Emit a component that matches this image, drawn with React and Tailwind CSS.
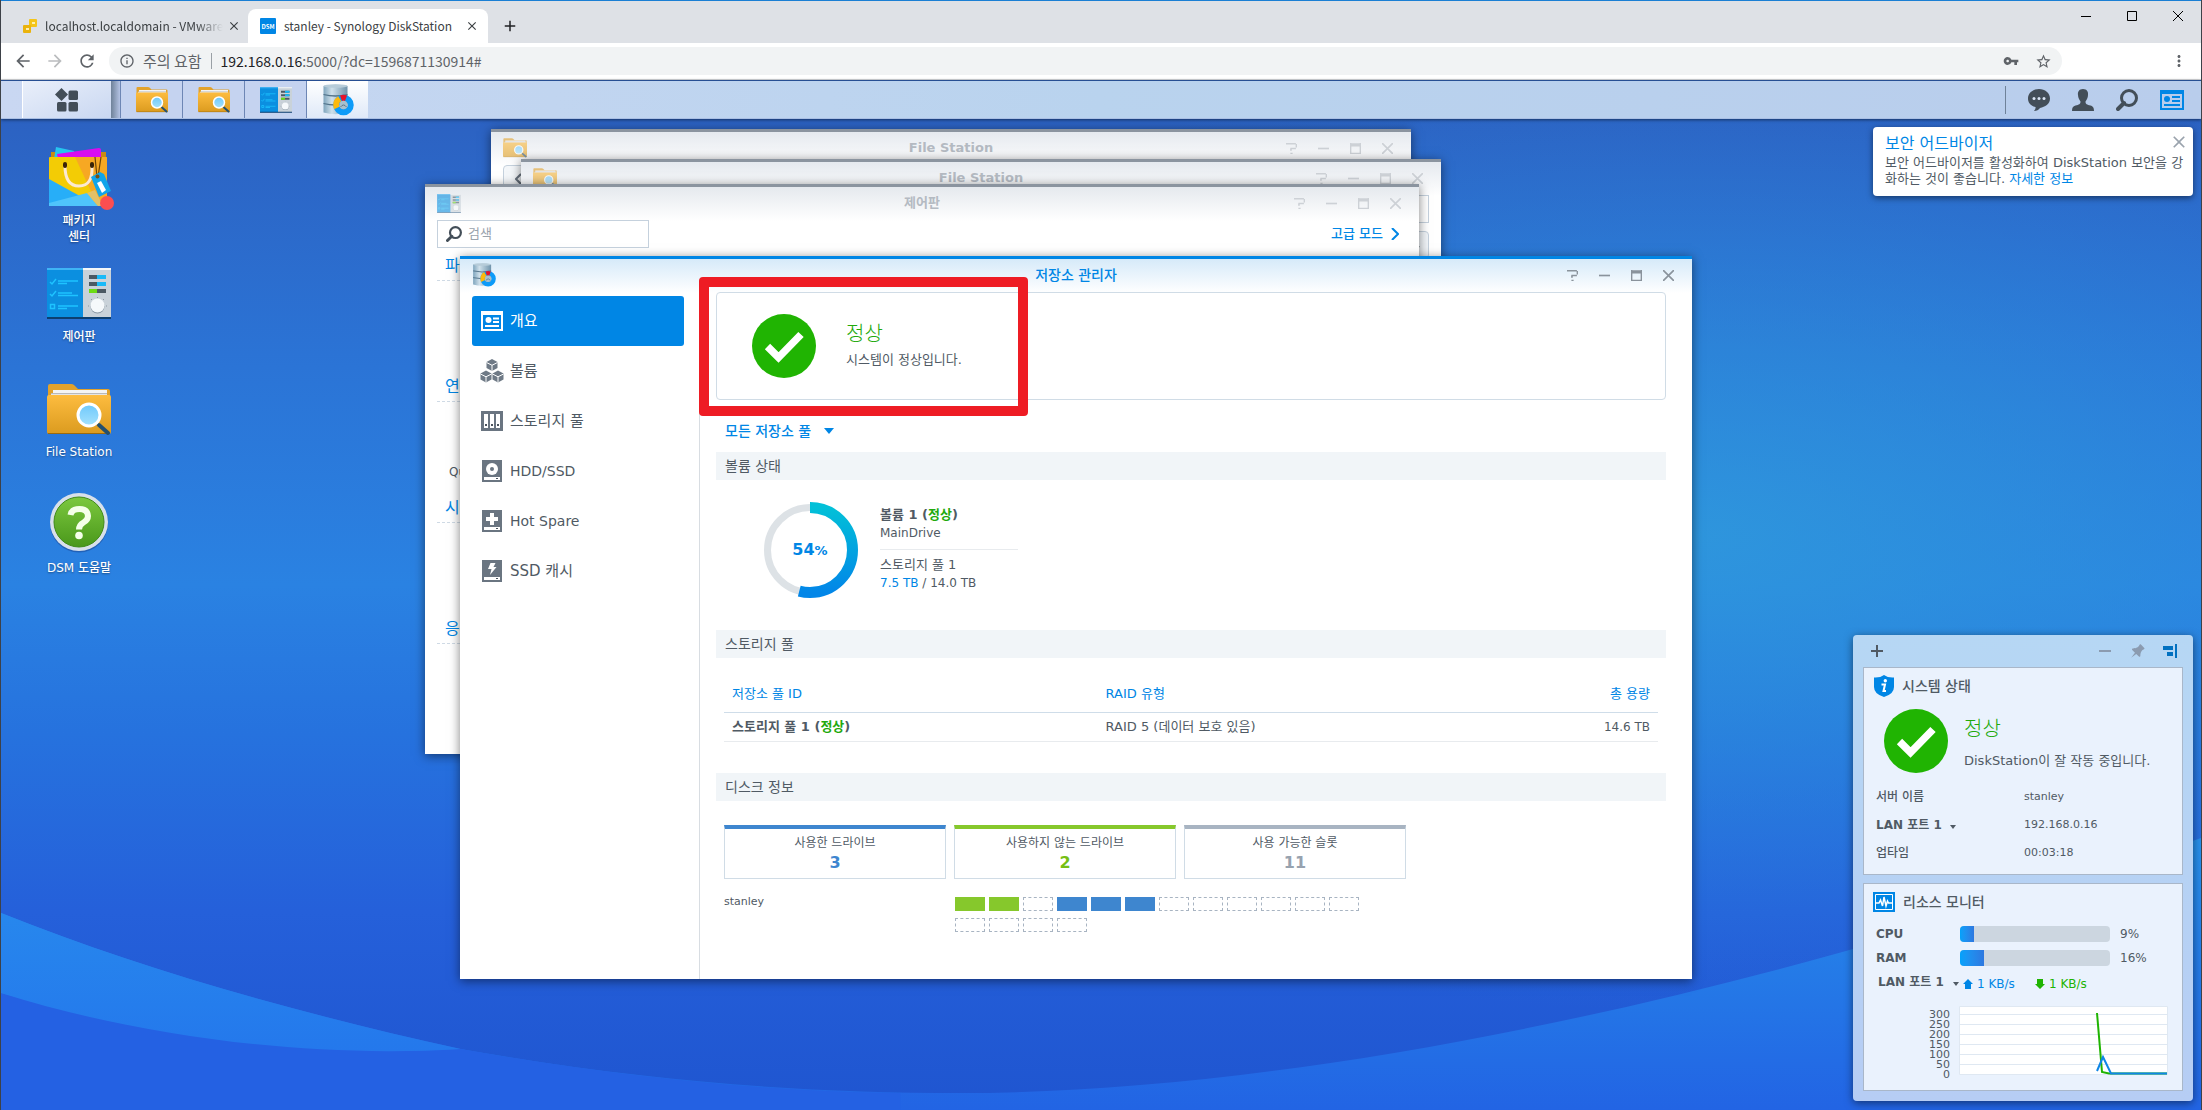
import { MdVpnKey, MdStarBorder, MdRefresh, MdArrowBack, MdArrowForward, MdInfoOutline, MdMoreVert, MdClose, MdAdd } from 'react-icons/md';
import { TiPin } from 'react-icons/ti';

const UI_FONT = "font-['DejaVu_Sans','Noto_Sans_CJK_KR',sans-serif]";
const CHROME_FONT = "font-['Noto_Sans_CJK_KR',sans-serif]";

/* ---------- icons ---------- */

function FolderIcon({ className }) {
  return (
    <svg viewBox="0 0 64 52" className={className} aria-hidden="true">
      <defs>
        <linearGradient id="folderFront" x1="0" y1="0" x2="0" y2="1">
          <stop offset="0" stopColor="#fdbc3f" />
          <stop offset="1" stopColor="#db9b1f" />
        </linearGradient>
        <linearGradient id="folderLens" x1="0" y1="0" x2="0" y2="1">
          <stop offset="0" stopColor="#6ec8fb" />
          <stop offset="1" stopColor="#a5e2fd" />
        </linearGradient>
      </defs>
      <path d="M1 2q0-2 2-2h21q2 0 3 1l4 4h30q2 0 2 2v14H1z" fill="#e2a22b" />
      <path d="M6 6h54v8H6z" fill="#f4f4f4" />
      <path d="M4 9h56v1H4z" fill="#b9b9b9" />
      <path d="M4 10h56v4H4z" fill="#e4e4e4" />
      <path d="M0 13q0-2 2-2h60q2 0 2 2v35q0 2-2 2H2q-2 0-2-2z" fill="url(#folderFront)" />
      <path d="M1 49.500h62" stroke="#9c6a0d" strokeWidth="1" />
      <path d="M52 41l9 8" stroke="#24506f" strokeWidth="4" strokeLinecap="round" />
      <circle cx="42" cy="31" r="11" fill="url(#folderLens)" stroke="#fff" strokeWidth="3" />
    </svg>
  );
}

function ControlPanelIcon({ className }) {
  return (
    <svg viewBox="0 0 64 51" className={className} aria-hidden="true">
      <path d="M0 0h37v50H0z" fill="#0b8fe0" />
      <path d="M0 0h37v2H0z" fill="#3fb4f5" />
      <path d="M36 0h28v50H36z" fill="#c9d2d9" />
      <path d="M36 0h28v2H36z" fill="#f4f7f9" />
      <path d="M0 50h64" stroke="#0c3f70" strokeWidth="2" />
      <g stroke="#1ec3ff" strokeWidth="1.500" fill="none">
        <path d="M3 14l2 2 4-5M11 13h20M11 15.500h9M3 26l2 2 4-5M11 25h14M11 27.500h20M3.500 36.500h4v4h-4zM11 38h20M11 40.500h9" />
      </g>
      <path d="M42 7h17v4H42zM42 14h17v4H42zM42 21h17v4H42z" fill="#4b5963" />
      <path d="M50 7h9v4h-9zM50 14h9v4h-9z" fill="#19baf8" />
      <path d="M42 21h8v4h-8z" fill="#6cdc14" />
      <g stroke="#8d99a2">
        <path d="M42 38h-1M59 38h1M50.500 30v-1M45 32l-1-1M56 32l1-1" />
      </g>
      <circle cx="50.500" cy="38.500" r="7" fill="#8896a1" />
      <circle cx="50.500" cy="37.500" r="7" fill="#f5f9fb" />
    </svg>
  );
}

function StorageIcon({ className }) {
  return (
    <svg viewBox="0 0 64 64" className={className} aria-hidden="true">
      <defs>
        <linearGradient id="drum" x1="0" y1="0" x2="1" y2="0">
          <stop offset="0" stopColor="#7fa5bd" />
          <stop offset=".35" stopColor="#cfe0ea" />
          <stop offset="1" stopColor="#6f93ab" />
        </linearGradient>
      </defs>
      <path d="M3 4q24-6 48 0v53q-24 7-48 0z" fill="url(#drum)" />
      <ellipse cx="27" cy="4" rx="24" ry="3.500" fill="#b7ccd9" />
      <path d="M3 21q24 6 48 0M3 39q24 6 48 0" stroke="#52738a" strokeWidth="2.500" fill="none" />
      <circle cx="43" cy="42" r="14.500" fill="none" stroke="#0d9bf8" strokeWidth="12" />
      <path d="M35.500 29.500A14.500 14.500 0 0 0 29.500 48" fill="none" stroke="#fdb90b" strokeWidth="12" />
      <path d="M38 28.500A14.500 14.500 0 0 1 48 28.500" fill="none" stroke="#e5132a" strokeWidth="12" />
      <circle cx="43" cy="42" r="8.500" fill="#a8c0ce" />
      <path d="M37 46q6-8 12 0" stroke="#5d7687" strokeWidth="2" fill="none" />
    </svg>
  );
}

function PackageIcon({ className }) {
  return (
    <svg viewBox="0 0 66 64" className={className} aria-hidden="true">
      <path d="M3 5h55v10H3z" fill="#c98a12" />
      <path d="M8 0l18 4 2 8H6z" fill="#27c5ef" />
      <path d="M9 7l42-6q2 0 2 2v9H10z" fill="#d80cf0" />
      <path d="M1 11q0-1 1-1h56q1 0 1 1v48H1z" fill="#f3cc05" />
      <path d="M27 10h31q1 0 1 1v48H50z" fill="#f7a823" />
      <path d="M1 32l49 27H1z" fill="#27aef8" />
      <path d="M1 56l38-10 11 13H1z" fill="#4fc4fb" />
      <path d="M39 46l8-3 8 16h-5z" fill="#e2c067" />
      <path d="M17 19q0 20 14 20t13-20" fill="none" stroke="#fbe9d3" strokeWidth="3" />
      <path d="M17 17v2M44 17v2" stroke="#3a2408" strokeWidth="4" strokeLinecap="round" />
      <path d="M47 10l2 20M53 10l-3 20" stroke="#6d4508" strokeWidth="1.200" />
      <path d="M43 30l9-5 4 2 7 17-12 6z" fill="#11a5ea" />
      <circle cx="49.500" cy="29.500" r="2" fill="#7c5010" />
      <path d="M49 36l4-2 5 9-4 3z" fill="#fff" />
      <circle cx="59" cy="56" r="7" fill="#fb4e51" />
    </svg>
  );
}

function HelpIcon({ className }) {
  return (
    <svg viewBox="0 0 60 62" className={className} aria-hidden="true">
      <defs>
        <linearGradient id="helpFill" x1="0" y1="0" x2="0" y2="1">
          <stop offset="0" stopColor="#7cc83e" />
          <stop offset="1" stopColor="#4a981b" />
        </linearGradient>
      </defs>
      <circle cx="30" cy="31.500" r="29" fill="#1c4d9c" opacity=".6" />
      <circle cx="30" cy="30" r="29" fill="#d8e0ea" />
      <circle cx="30" cy="30" r="25" fill="url(#helpFill)" stroke="#3f8a17" />
      <path d="M21.500 23q1-6 9-6t8.500 7q0 4-4.500 6.500t-4.500 7" fill="none" stroke="#f5ffe9" strokeWidth="6" />
      <circle cx="30" cy="43.500" r="3.800" fill="#f5ffe9" />
    </svg>
  );
}

function CheckCircle() {
  return (
    <svg viewBox="0 0 64 64" className="size-16 shrink-0" aria-hidden="true">
      <circle cx="32" cy="32" r="32" fill="#20b402" />
      <path d="M15.500 32.500L26.500 43.500 49 20.500" fill="none" stroke="#fff" strokeWidth="7.500" />
    </svg>
  );
}

function SearchIcon({ className }) {
  return (
    <svg viewBox="0 0 22 22" className={className} aria-hidden="true">
      <circle cx="13" cy="9" r="7.500" fill="none" stroke="currentColor" strokeWidth="3" />
      <path d="M2 20l6-6" stroke="currentColor" strokeWidth="4" strokeLinecap="round" />
    </svg>
  );
}

function OverviewIcon({ className }) {
  return (
    <svg viewBox="0 0 24 20" className={className} aria-hidden="true">
      <path fillRule="evenodd" d="M0 0h24v20H0zM2 4v14h20V4z" fill="currentColor" />
      <circle cx="7" cy="9" r="3" fill="currentColor" />
      <path d="M12 7h8M12 11h8M4 15h16" stroke="currentColor" strokeWidth="2" />
    </svg>
  );
}

function DriveGlyph({ type }) {
  if (type === 'overview') {
    return (
      <svg viewBox="0 0 22 20" className="h-5 w-[22px]" aria-hidden="true">
        <path d="M0 0h22v20H0z" fill="#fff" />
        <path d="M2 4h18v14H2z" fill="#0086e5" />
        <circle cx="7.500" cy="9" r="3" fill="#fff" />
        <path d="M12 7.500h6M12 11h6M4 15h14" stroke="#fff" strokeWidth="2" />
      </svg>
    );
  }
  if (type === 'volume') {
    return (
      <svg viewBox="0 0 24 24" className="-ml-px size-6" aria-hidden="true">
        {['translate(6 0)', 'translate(0 11.500)', 'translate(12 11.500)'].map((t) => (
          <g key={t} transform={t}>
            <path d="M6 0l5.500 3v6L6 12 .500 9V3z" fill="#6f7a86" />
            <path d="M.500 3.500L6 6.300l5.500-2.800M6 6.300V12" stroke="#fff" strokeWidth="1" fill="none" />
          </g>
        ))}
      </svg>
    );
  }
  if (type === 'pool') {
    return (
      <svg viewBox="0 0 22 20" className="h-5 w-[22px]" aria-hidden="true">
        <path d="M0 0h22v20H0z" fill="#6a7581" />
        <path d="M3 3h4v14H3zM9 3h4v14H9zM15 3h4v14h-4z" fill="#fff" />
        <path d="M4 13h2v2H4zM10 13h2v2h-2zM16 13h2v2h-2z" fill="#4b545e" />
      </svg>
    );
  }
  return (
    <svg viewBox="0 0 20 22" className="ml-px h-[22px] w-5" aria-hidden="true">
      <path d="M0 0h20v22H0z" fill="#6a7581" />
      <path d="M2 17h16v3H2z" fill="#fff" />
      <path d="M14 18h2v1h-2z" fill="#4b545e" />
      {type === 'disk' && (
        <>
          <circle cx="10" cy="9" r="6" fill="#fff" />
          <circle cx="10" cy="9" r="2" fill="#6a7581" />
        </>
      )}
      {type === 'spare' && <path d="M8 3h4v4h4v4h-4v4H8v-4H4V7h4z" fill="#fff" />}
      {type === 'cache' && <path d="M8.500 3h5l-2 4h3L8 15l1.500-6H6z" fill="#fff" />}
    </svg>
  );
}

/* ---------- browser ---------- */

function BrowserTabs() {
  return (
    <div className={`flex h-[43px] shrink-0 items-end border-t border-[#1a7fd4] bg-[#dee1e6] ${CHROME_FONT}`}>
      <div className="flex h-[34px] w-[247px] items-center pr-2 pl-[22px] text-xs text-[#3c4043]">
        <svg viewBox="0 0 14 14" className="mr-2 size-[14px] shrink-0" aria-hidden="true">
          <path d="M6 1q0-1 1-1h6q1 0 1 1v6q0 1-1 1H7q-1 0-1-1z" fill="#f5c518" />
          <path d="M0 7q0-1 1-1h6q1 0 1 1v6q0 1-1 1H1q-1 0-1-1z" fill="#eab30c" />
          <path d="M9 3h3v2H9zM3 9h3v2H3z" fill="#fdf0b0" />
        </svg>
        <span className="flex-1 mask-[linear-gradient(to_right,black_85%,transparent)] whitespace-nowrap">
          localhost.localdomain - VMware
        </span>
        <button aria-label="탭 닫기" className="ml-1 text-[#3c4043]"><MdClose size={14} /></button>
      </div>
      <div className="flex h-[34px] w-[240px] items-center rounded-t-lg bg-white pl-3 text-xs text-[#3c4043]">
        <svg viewBox="0 0 16 16" className="mr-2 size-4 shrink-0" aria-hidden="true">
          <rect width="16" height="16" rx="1" fill="#0086e5" />
          <text x="8" y="10.500" textAnchor="middle" fontSize="6" fontWeight="bold" fill="#fff">DSM</text>
        </svg>
        <span className="flex-1 whitespace-nowrap">stanley - Synology DiskStation</span>
        <button aria-label="탭 닫기" className="mr-[9px]"><MdClose size={14} /></button>
      </div>
      <button aria-label="새 탭" className="mb-2 ml-[13px] text-[#202124]"><MdAdd size={18} /></button>
      <div className="ml-auto flex h-[30px] items-center self-start text-black">
        <button aria-label="최소화" className="flex w-[46px] justify-center">
          <svg viewBox="0 0 10 10" className="size-[10px]"><path d="M0 5.500h10" stroke="currentColor" /></svg>
        </button>
        <button aria-label="최대화" className="flex w-[46px] justify-center">
          <svg viewBox="0 0 10 10" className="size-[10px]"><path d="M.500.500h9v9h-9z" fill="none" stroke="currentColor" /></svg>
        </button>
        <button aria-label="닫기" className="flex w-[46px] justify-center">
          <svg viewBox="0 0 10 10" className="size-[10px]"><path d="M0 0l10 10M10 0L0 10" stroke="currentColor" /></svg>
        </button>
      </div>
    </div>
  );
}

function AddressBar() {
  return (
    <div className={`flex h-[37px] shrink-0 items-center border-b border-[#d5d7da] bg-white pr-[13px] pl-3 text-[#5f6368] ${CHROME_FONT}`}>
      <div className="flex w-24 items-center gap-3">
        <button aria-label="뒤로"><MdArrowBack size={20} /></button>
        <button aria-label="앞으로" className="text-[#babcbe]"><MdArrowForward size={20} /></button>
        <button aria-label="새로고침"><MdRefresh size={20} /></button>
      </div>
      <div className="flex h-7 flex-1 items-center rounded-full bg-[#f1f3f4] px-[10px] text-sm">
        <MdInfoOutline size={16} />
        <span className="ml-2 text-[15px]">주의 요함</span>
        <span className="mx-[9px] h-4 w-px bg-[#9aa0a6]" />
        <span className="flex-1"><span className="text-[#202124]">192.168.0.16</span>:5000/?dc=1596871130914#</span>
        <MdVpnKey size={16} />
        <button aria-label="북마크" className="ml-4"><MdStarBorder size={17} /></button>
      </div>
      <button aria-label="메뉴" className="ml-[108px]"><MdMoreVert size={18} /></button>
    </div>
  );
}

/* ---------- DSM taskbar ---------- */

function TaskButton({ label, active, children }) {
  return (
    <button
      aria-label={label}
      className={`flex h-full w-[62px] items-center justify-center border-l border-[#6d86b5] ${
        active ? 'bg-linear-to-b from-white to-[#dfe9f8]' : 'bg-[#c5d3f0]'
      }`}
    >
      {children}
    </button>
  );
}

function Taskbar() {
  return (
    <div className="relative z-10 flex h-[39px] shrink-0 border-t border-b border-t-[#274f93] border-b-[#a9bfe4] bg-linear-to-r from-[#c9d7f2] via-[#b9d3ee] to-[#b9cdec] shadow-[0_1px_3px_rgba(0,0,0,0.5)]">
      <div className="w-[21px]" />
      <button aria-label="기본 메뉴" className="flex w-[89px] items-center justify-center border-l border-white bg-linear-to-br from-[#e9effa] to-[#c9d7f1]">
        <svg viewBox="0 0 24 24" className="size-6 text-[#434e58]" fill="currentColor" aria-hidden="true">
          <path d="M6.500 0l6.500 6.500-6.500 6.500L0 6.500z" />
          <rect x="13.500" y="2.500" width="9.500" height="9.500" rx="1.500" />
          <rect x="2" y="14" width="9.500" height="9.500" rx="1.500" />
          <rect x="13.500" y="14" width="9.500" height="9.500" rx="1.500" />
        </svg>
      </button>
      <div className="w-[9px] bg-linear-to-r from-[#6f8299] to-[#b4c3e4]" />
      <TaskButton label="File Station"><FolderIcon className="h-[26px] w-8" /></TaskButton>
      <TaskButton label="File Station"><FolderIcon className="h-[26px] w-8" /></TaskButton>
      <TaskButton label="제어판"><ControlPanelIcon className="h-[26px] w-8" /></TaskButton>
      <TaskButton label="저장소 관리자" active><StorageIcon className="size-8" /></TaskButton>
      <div className="ml-auto flex items-center gap-[22px] pr-[17px] text-[#434e58]">
        <span className="h-7 w-px bg-[#6f8299]" />
        <button aria-label="알림">
          <svg viewBox="0 0 22 22" className="size-[22px]" aria-hidden="true">
            <path d="M11 0c6 0 11 4 11 9.500S17 18 12 19q-2 3-6 3 2-2 1.500-4C3 17 0 14 0 9.500 0 4 5 0 11 0z" fill="currentColor" />
            <circle cx="6" cy="9.500" r="1.500" fill="#dbe6f5" />
            <circle cx="11" cy="9.500" r="1.500" fill="#dbe6f5" />
            <circle cx="16" cy="9.500" r="1.500" fill="#dbe6f5" />
          </svg>
        </button>
        <button aria-label="사용자">
          <svg viewBox="0 0 22 22" className="size-[22px]" aria-hidden="true">
            <path d="M11 0c4 0 5.500 3 5 6 0 3-1.500 5-2.500 6.500 0 3 1.500 3 5 4 2.500.800 3.500 2 3.500 5.500H0c0-3.500 1-4.700 3.500-5.500 3.500-1 5-1 5-4C7.500 11 6 9 6 6c-.500-3 1-6 5-6z" fill="currentColor" />
          </svg>
        </button>
        <button aria-label="검색"><SearchIcon className="size-[22px]" /></button>
        <button aria-label="위젯" className="text-[#0086e5]"><OverviewIcon className="h-5 w-6" /></button>
      </div>
    </div>
  );
}

/* ---------- windows ---------- */

const windowControls = [
  { label: '도움말', d: 'M0 .5h9M9.500 1v3M4 5h5M4.500 5v2M4 9.500h2' },
  { label: '최소화', d: 'M0 5h10' },
  { label: '최대화', d: 'M.500 1h9M.500 2.500h9M.500 0v10M9.500 0v10M0 9.500h10' },
  { label: '닫기', d: 'M0 0l10 10M10 0L0 10' },
];

function Window({ title, active, icon, className, children }) {
  return (
    <section
      className={`absolute flex flex-col border-t-3 shadow-[0_2px_10px_rgba(0,0,0,0.5)] ${
        active
          ? 'border-[#0086e5] bg-[linear-gradient(to_bottom,#d6eaf9,#fff_34px)]'
          : 'border-[#8b949f] bg-[linear-gradient(to_bottom,#e5e9ee,#fff_34px)]'
      } ${className}`}
    >
      <header className="grid h-8 shrink-0 grid-cols-[128px_1fr_128px] items-center px-2">
        <span className={active ? 'pl-1' : 'pl-1 opacity-60'}>{icon}</span>
        <h2 className={`text-center leading-5 ${active ? 'text-sm font-medium text-[#0086e5]' : 'text-[13px] font-bold text-[#b4bac2]'}`}>
          {title}
        </h2>
        <div className={`flex ${active ? 'text-[#8a939c]' : 'text-[#cdd1d6]'}`}>
          {windowControls.map((c) => (
            <button key={c.label} aria-label={c.label} className="flex h-6 w-8 items-center justify-center">
              <svg viewBox="0 0 10 10" className="size-[11px]" aria-hidden="true">
                <path d={c.d} fill="none" stroke="currentColor" strokeWidth="1.500" />
              </svg>
            </button>
          ))}
        </div>
      </header>
      {children}
    </section>
  );
}

function FileStationBack() {
  return (
    <Window title="File Station" icon={<FolderIcon className="h-5 w-6" />} className="top-[10px] left-[490px] h-[400px] w-[920px]">
      <div className="px-3 pt-px">
        <button aria-label="이전" className="flex h-7 w-8 items-center justify-center rounded border border-[#c5d1dd] bg-[#f4f7fa] text-[#6a7581]">
          <svg viewBox="0 0 8 12" className="h-3 w-2"><path d="M6 1L1 6l5 5" fill="none" stroke="currentColor" strokeWidth="2" /></svg>
        </button>
      </div>
    </Window>
  );
}

function FileStationFront() {
  return (
    <Window title="File Station" icon={<FolderIcon className="h-5 w-6" />} className="top-10 left-[520px] h-[400px] w-[920px]">
      <div className="flex flex-col items-end gap-2 px-3 pt-px">
        <input aria-label="경로" className="h-7 w-60 border border-[#c5d1dd] bg-white" />
        <button aria-label="정렬" className="flex h-7 w-7 items-center justify-center rounded border border-[#c5d1dd] bg-[#f1f5f9] text-[#434e58]">
          <svg viewBox="0 0 10 12" className="h-3 w-[10px]"><path d="M5 0v10M1 7l4 4 4-4" fill="none" stroke="currentColor" strokeWidth="2" /></svg>
        </button>
      </div>
    </Window>
  );
}

const controlPanelGroups = [
  { name: '파일 공유' },
  { name: '연결성', item: 'QuickConnect' },
  { name: '시스템' },
  { name: '응용 프로그램' },
];

function ControlPanel() {
  return (
    <Window title="제어판" icon={<ControlPanelIcon className="h-[19px] w-6" />} className="top-[65px] left-[424px] h-[570px] w-[994px]">
      <div className="flex items-center justify-between pt-px pr-5 pl-3">
        <label className="flex h-7 w-[212px] items-center gap-[6px] border border-[#c5d1dd] bg-white pl-2 text-[#434e58]">
          <SearchIcon className="size-4" />
          <input aria-label="검색" placeholder="검색" className="w-40 text-[13px] outline-none placeholder:text-[#9aa3ad]" />
        </label>
        <a href="#" className="flex items-center gap-2 text-[13px] font-medium text-[#0086e5]">
          고급 모드
          <svg viewBox="0 0 8 12" className="h-3 w-2"><path d="M1 0l6 6-6 6" fill="none" stroke="currentColor" strokeWidth="2" /></svg>
        </a>
      </div>
      <div className="pl-3">
        {controlPanelGroups.map((g) => (
          <div key={g.name} className="h-[121px]">
            <h3 className="h-[33px] border-b border-dashed border-[#cfdae5] pt-2 pl-2 text-base leading-5 text-[#0086e5]">{g.name}</h3>
            {g.item && <p className="pt-[60px] pl-3 text-xs leading-5 text-[#505a64]">{g.item}</p>}
          </div>
        ))}
      </div>
    </Window>
  );
}

const menu = [
  { type: 'overview', label: '개요', current: true },
  { type: 'volume', label: '볼륨' },
  { type: 'pool', label: '스토리지 풀' },
  { type: 'disk', label: 'HDD/SSD', latin: true },
  { type: 'spare', label: 'Hot Spare', latin: true },
  { type: 'cache', label: 'SSD 캐시' },
];

function SectionTitle({ children }) {
  return <h3 className="h-7 bg-[#f1f5f8] pl-[9px] text-sm leading-7 text-[#505a64]">{children}</h3>;
}

function UsageRing({ percent }) {
  const r = 42.5;
  const length = 2 * Math.PI * r;
  return (
    <div className="relative size-24 shrink-0">
      <svg viewBox="0 0 96 96" className="size-24" aria-hidden="true">
        <defs>
          <linearGradient id="ring" x1="0" y1="0" x2="1" y2="0">
            <stop offset="0" stopColor="#0286e8" />
            <stop offset="1" stopColor="#02c0d8" />
          </linearGradient>
        </defs>
        <circle cx="48" cy="48" r={r} fill="none" stroke="#dde2e6" strokeWidth="7" />
        <circle
          cx="48" cy="48" r={r} fill="none" stroke="url(#ring)" strokeWidth="11"
          strokeDasharray={`${(length * percent) / 100} ${length}`}
          transform="rotate(-90 48 48)"
        />
      </svg>
      <p className="absolute inset-0 text-center text-base leading-[96px] font-bold text-[#0086e5]">
        {percent}<span className="text-[13px]">%</span>
      </p>
    </div>
  );
}

const driveCounts = [
  { label: '사용한 드라이브', count: 3, bar: 'border-t-[#3e86cf]', text: 'text-[#3e86cf]' },
  { label: '사용하지 않는 드라이브', count: 2, bar: 'border-t-[#86c82c]', text: 'text-[#76bf14]' },
  { label: '사용 가능한 슬롯', count: 11, bar: 'border-t-[#a8b4c2]', text: 'text-[#97a2af]' },
];

const slots = ['free', 'free', '', 'used', 'used', 'used', '', '', '', '', '', '', '', '', '', ''];
const slotStyle = {
  free: 'bg-[#86c82c]',
  used: 'bg-[#3e86cf]',
  '': 'border border-dashed border-[#a8b4c2]',
};

function StorageManager() {
  return (
    <Window title="저장소 관리자" active icon={<StorageIcon className="size-6" />} className="top-[137px] left-[459px] w-[1232px]">
      <div className="flex text-[#505a64]">
        <nav className="w-60 border-r border-[#d8dde2] pt-[5px] pl-3">
          {menu.map((m) => (
            <a
              key={m.type}
              href="#"
              className={`flex h-[50px] w-[212px] items-center rounded-[3px] pl-[9px] ${m.latin ? 'text-sm' : 'text-[15px]'} ${
                m.current ? 'bg-[#0086e5] text-white' : ''
              }`}
            >
              <span className="w-[29px]"><DriveGlyph type={m.type} /></span>
              {m.label}
            </a>
          ))}
        </nav>
        <div className="flex-1 pt-px pr-[26px] pb-[47px] pl-4">
          <div className="relative flex h-[108px] items-center gap-[30px] rounded border border-[#d0dce6] bg-white pl-[35px]">
            <CheckCircle />
            <div>
              <p className="text-xl leading-7 font-light text-[#22a90b]">정상</p>
              <p className="text-[13px] leading-6">시스템이 정상입니다.</p>
            </div>
            <div className="pointer-events-none absolute -top-4 -left-[18px] h-[139px] w-[329px] rounded border-10 border-[#ee1c24]" />
          </div>
          <div className="mt-[21px] mb-[11px] flex h-5 items-center gap-3 pl-[9px] text-[#0086e5]">
            <select aria-label="저장소 풀 선택" className="appearance-none text-sm leading-5 font-medium">
              <option>모든 저장소 풀</option>
            </select>
            <svg viewBox="0 0 10 6" className="h-[6px] w-[10px]" aria-hidden="true"><path d="M0 0h10L5 6z" fill="currentColor" /></svg>
          </div>

          <SectionTitle>볼륨 상태</SectionTitle>
          <div className="flex h-[150px] gap-[22px] pt-[22px] pl-[46px]">
            <UsageRing percent={54} />
            <div className="w-[138px] pt-[3px] text-[13px] leading-[19px]">
              <p className="font-bold">볼륨 1 (<span className="text-[#22a90b]">정상</span>)</p>
              <p className="text-xs leading-[19px]">MainDrive</p>
              <p className="mt-[6px] border-t border-[#e8ebee] pt-[5px]">스토리지 풀 1</p>
              <p className="text-xs leading-[19px] whitespace-nowrap"><span className="text-[#0086e5]">7.5 TB</span> / 14.0 TB</p>
            </div>
          </div>

          <SectionTitle>스토리지 풀</SectionTitle>
          <div className="mx-2 mt-[18px] mb-[31px]">
            <table className="w-full text-left text-[13px]">
              <thead>
                <tr className="h-9 border-b border-[#cfdde9] text-[#0086e5]">
                  <th className="w-[40%] px-2 font-normal">저장소 풀 ID</th>
                  <th className="px-2 font-normal">RAID 유형</th>
                  <th className="px-2 text-right font-normal">총 용량</th>
                </tr>
              </thead>
              <tbody>
                <tr className="h-[29px] border-b border-[#e8ebee]">
                  <td className="px-2 font-bold">스토리지 풀 1 (<span className="text-[#22a90b]">정상</span>)</td>
                  <td className="px-2">RAID 5 (데이터 보호 있음)</td>
                  <td className="px-2 text-right text-xs">14.6 TB</td>
                </tr>
              </tbody>
            </table>
          </div>

          <SectionTitle>디스크 정보</SectionTitle>
          <div className="mt-6 ml-2 flex gap-2">
            {driveCounts.map((d) => (
              <div key={d.label} className={`h-[54px] w-[222px] border border-t-4 border-[#d0dce6] pt-1 text-center ${d.bar}`}>
                <p className="text-xs leading-5">{d.label}</p>
                <p className={`text-base leading-5 font-bold ${d.text}`}>{d.count}</p>
              </div>
            ))}
          </div>
          <div className="mt-[18px] ml-2 flex">
            <p className="w-[231px] text-[11px] leading-[10px]">stanley</p>
            <div className="flex w-[408px] flex-wrap gap-x-1 gap-y-[7px]">
              {slots.map((s, i) => (
                <span key={i} className={`h-[14px] w-[30px] ${slotStyle[s]}`} />
              ))}
            </div>
          </div>
        </div>
      </div>
    </Window>
  );
}

/* ---------- desktop ---------- */

function Wallpaper() {
  return (
    <svg viewBox="0 0 2202 991" preserveAspectRatio="none" className="absolute inset-0 h-full w-full" aria-hidden="true">
      <defs>
        <linearGradient id="sky" x1="0" y1="0" x2="0" y2="1">
          <stop offset="0" stopColor="#2c62c2" />
          <stop offset=".25" stopColor="#2b74d6" />
          <stop offset=".47" stopColor="#2a82e2" />
          <stop offset=".62" stopColor="#2672de" />
          <stop offset=".8" stopColor="#2560da" />
          <stop offset="1" stopColor="#1f55d0" />
        </linearGradient>
        <radialGradient id="glow" cx="0.770" cy="0.420" r="0.480">
          <stop offset="0" stopColor="#2f9bdc" stopOpacity=".8" />
          <stop offset=".4" stopColor="#2d94dc" stopOpacity=".5" />
          <stop offset="1" stopColor="#2a84e2" stopOpacity="0" />
        </radialGradient>
        <linearGradient id="wave" x1="0" y1="0" x2="0" y2="1">
          <stop offset="0" stopColor="#2790ea" />
          <stop offset="1" stopColor="#2264e4" />
        </linearGradient>
        <linearGradient id="band" x1="0" y1="0" x2="0" y2="1">
          <stop offset="0" stopColor="#2787ed" />
          <stop offset="1" stopColor="#2478ec" />
        </linearGradient>
      </defs>
      <path d="M0 0h2202v991H0z" fill="url(#sky)" />
      <path d="M0 0h2202v991H0z" fill="url(#glow)" />
      <path d="M0 794C140 850 300 895 460 930 640 962 800 974 960 974 1300 974 1750 880 2202 719V991H0z" fill="url(#wave)" />
      <path d="M0 874C120 905 280 940 460 930 640 962 800 974 900 974L900 991H0z" fill="#2461e3" />
      <path d="M0 794C140 850 300 895 460 930 300 940 130 915 0 874z" fill="url(#band)" />
    </svg>
  );
}

const shortcuts = [
  { label: ['패키지', '센터'], icon: <PackageIcon className="ml-1 h-16 w-[66px]" />, className: 'top-[28px]', gap: 'mt-[2px]' },
  { label: ['제어판'], icon: <ControlPanelIcon className="h-[51px] w-16" />, className: 'top-[149px]', gap: 'mt-[10px]' },
  { label: ['File Station'], icon: <FolderIcon className="h-[52px] w-16" />, className: 'top-[265px]', gap: 'mt-2' },
  { label: ['DSM 도움말'], icon: <HelpIcon className="h-[62px] w-[60px]" />, className: 'top-[373px]', gap: 'mt-[6px]' },
];

function DesktopIcons() {
  return shortcuts.map((s) => (
    <button key={s.label[0]} className={`absolute left-[28px] flex w-[100px] flex-col items-center text-white ${s.className}`}>
      {s.icon}
      <span className={`text-xs leading-4 font-medium [text-shadow:0_1px_2px_rgba(0,0,0,0.4)] ${s.gap}`}>
        {s.label.map((line) => (
          <span key={line} className="block">{line}</span>
        ))}
      </span>
    </button>
  ));
}

function Notification() {
  return (
    <aside className="absolute top-2 right-2 w-80 rounded bg-white py-[6px] pr-3 pb-[9px] pl-3 shadow-[0_2px_6px_rgba(0,0,0,0.5)]">
      <div className="flex h-[22px] items-center justify-between">
        <h2 className="text-base leading-5 text-[#0086e5]">보안 어드바이저</h2>
        <button aria-label="닫기" className="-mt-1 -mr-2 text-[#9aa3ad]"><MdClose size={20} /></button>
      </div>
      <p className="text-[13px] leading-4 whitespace-nowrap text-[#505a64]">
        보안 어드바이저를 활성화하여 DiskStation 보안을 강
        <br />
        화하는 것이 좋습니다. <a href="#" className="text-[#0086e5]">자세한 정보</a>
      </p>
    </aside>
  );
}

function Caret() {
  return <svg viewBox="0 0 6 4" className="mt-1 h-1 w-[6px]" aria-hidden="true"><path d="M0 0h6L3 4z" fill="currentColor" /></svg>;
}

const statusRows = [
  { label: '서버 이름', value: 'stanley' },
  { label: 'LAN 포트 1', value: '192.168.0.16', menu: true },
  { label: '업타임', value: '00:03:18' },
];

const meters = [
  { label: 'CPU', value: 9 },
  { label: 'RAM', value: 16 },
];

function SystemHealth() {
  return (
    <section className="h-[208px] border border-[#a9b7c9] bg-[#eaf2fd]">
      <h3 className="flex h-9 items-center gap-2 pl-[10px] text-sm font-medium">
        <svg viewBox="0 0 20 22" className="h-[22px] w-5" aria-hidden="true">
          <path d="M10 0q4 3 10 2.500V12q0 7-10 10Q0 19 0 12V2.500Q6 3 10 0z" fill="#0086e5" />
          <circle cx="11.300" cy="5.700" r="1.700" fill="#fff" />
          <path d="M7.500 9.500h3.500L9.500 16H12" fill="none" stroke="#fff" strokeWidth="2" />
        </svg>
        시스템 상태
      </h3>
      <div className="flex gap-4 pt-[5px] pl-5">
        <CheckCircle />
        <div className="pt-[6px]">
          <p className="text-xl leading-7 font-light text-[#22a90b]">정상</p>
          <p className="pt-2 text-[13px] leading-5 whitespace-nowrap">DiskStation이 잘 작동 중입니다.</p>
        </div>
      </div>
      <dl className="grid grid-cols-[148px_1fr] pt-[10px] pl-3 leading-7">
        {statusRows.map((r) => (
          <div key={r.label} className="contents">
            <dt className={`flex items-center gap-2 text-xs leading-7 ${r.menu ? 'font-bold' : 'font-medium'}`}>
              {r.label}
              {r.menu && <Caret />}
            </dt>
            <dd className="text-[11px] leading-7">{r.value}</dd>
          </div>
        ))}
      </dl>
    </section>
  );
}

function ResourceMonitor() {
  return (
    <section className="mt-2 h-[208px] border border-[#a9b7c9] bg-[#eaf2fd]">
      <h3 className="flex h-9 items-center gap-2 pl-[9px] text-sm font-medium">
        <svg viewBox="0 0 22 20" className="h-5 w-[22px]" aria-hidden="true">
          <path d="M0 0h22v20H0z" fill="#0086e5" />
          <path d="M2.500 2.500h17v15h-17z" fill="none" stroke="#fff" />
          <path d="M3 11h3l1.500-3 2 6 1.500-9 2 9 1.500-5 1 2H19" fill="none" stroke="#fff" strokeWidth="1.500" />
        </svg>
        리소스 모니터
      </h3>
      <div className="pt-[2px]">
        {meters.map((m) => (
          <div key={m.label} className="flex h-6 items-center pl-3 text-xs">
            <span className="w-[84px] font-bold">{m.label}</span>
            <div className="h-4 w-[150px] overflow-hidden rounded-sm bg-[#ccd6e0]">
              <div className="h-full bg-linear-to-r from-[#02a2fb] to-[#2d78e0]" style={{ width: `${m.value}%` }} />
            </div>
            <span className="pl-[10px]">{m.value}%</span>
          </div>
        ))}
      </div>
      <div className="flex h-6 items-center pl-[14px] text-xs">
        <span className="flex w-[85px] items-center justify-between pr-1 font-bold whitespace-nowrap">LAN 포트 1 <Caret /></span>
        <span className="flex w-[72px] items-center gap-1 pt-1 text-[#0086e5]">
          <svg viewBox="0 0 10 10" className="size-[10px]"><path d="M5 0l5 5H8v5H2V5H0z" fill="currentColor" /></svg>
          1 KB/s
        </span>
        <span className="flex items-center gap-1 pt-1 text-[#20b402]">
          <svg viewBox="0 0 10 10" className="size-[10px]"><path d="M5 10l5-5H8V0H2v5H0z" fill="currentColor" /></svg>
          1 KB/s
        </span>
      </div>
      <div className="flex gap-[9px] pt-3 pl-[62px]">
        <ul className="w-6 pt-1 text-right text-[11px] leading-[10px]">
          {[300, 250, 200, 150, 100, 50, 0].map((n) => (
            <li key={n}>{n}</li>
          ))}
        </ul>
        <svg viewBox="0 0 209 69" className="h-[69px] w-[209px]" aria-hidden="true">
          <path d="M.500.500h208v68H.500z" fill="#fff" stroke="#dfe8f2" />
          <path d="M0 8.500h209M0 18.500h209M0 28.500h209M0 38.500h209M0 48.500h209M0 58.500h209" stroke="#dfe8f2" />
          <path d="M138 7l5 59 7 1.500h58" fill="none" stroke="#20b402" strokeWidth="2" />
          <path d="M138 65l6-14 8 16.500h56" fill="none" stroke="#0f86e6" strokeWidth="2" />
        </svg>
      </div>
    </section>
  );
}

function WidgetPanel() {
  return (
    <aside className="absolute top-[516px] right-2 w-[340px] rounded bg-linear-to-b from-[#b6d7f4] to-[#b6cdf4] px-[10px] pb-[10px] text-[#505a64] shadow-[0_2px_8px_rgba(0,0,0,0.5)]">
      <div className="flex h-8 items-center pr-[6px] pl-2">
        <button aria-label="추가">
          <svg viewBox="0 0 12 12" className="size-3"><path d="M6 0v12M0 6h12" stroke="currentColor" strokeWidth="2" /></svg>
        </button>
        <div className="ml-auto flex items-center gap-4">
          <button aria-label="최소화">
            <svg viewBox="0 0 12 12" className="size-3"><path d="M0 6h12" stroke="#8b9bb0" strokeWidth="2" /></svg>
          </button>
          <button aria-label="고정" className="text-[#8b9bb0]"><TiPin size={20} /></button>
          <button aria-label="도킹">
            <svg viewBox="0 0 14 14" className="size-[14px]"><path d="M0 2h10v4H0zM4 8h6v4H4zM12 0h2v14h-2z" fill="#0070c0" /></svg>
          </button>
        </div>
      </div>
      <SystemHealth />
      <ResourceMonitor />
    </aside>
  );
}

export default function App() {
  return (
    <div className="flex h-screen flex-col overflow-hidden border-x border-[#3d4148]">
      <BrowserTabs />
      <AddressBar />
      <div className={`flex min-h-0 flex-1 flex-col ${UI_FONT}`}>
        <Taskbar />
        <main className="relative flex-1 overflow-hidden bg-[#2560da]">
          <Wallpaper />
          <DesktopIcons />
          <FileStationBack />
          <FileStationFront />
          <ControlPanel />
          <StorageManager />
          <Notification />
          <WidgetPanel />
        </main>
      </div>
    </div>
  );
}
